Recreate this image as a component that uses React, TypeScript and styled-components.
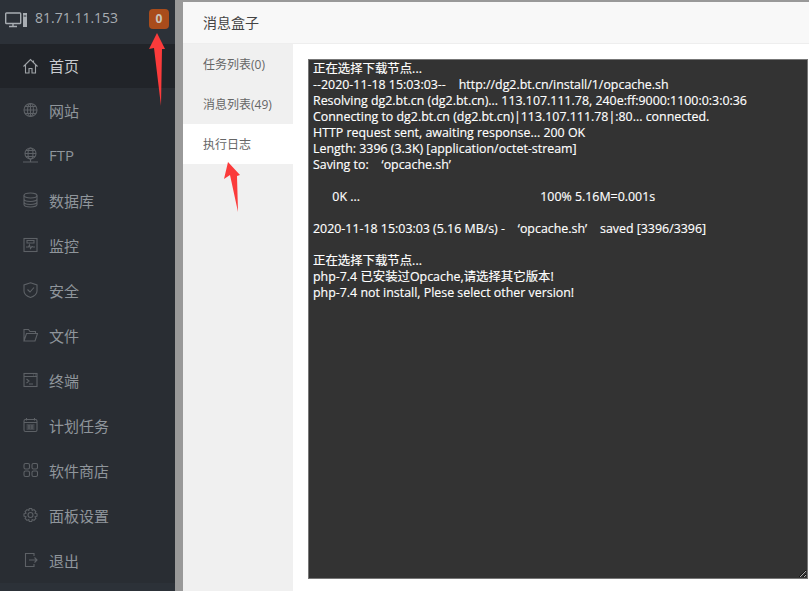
import React from "react";
import styled, { createGlobalStyle } from "styled-components";

const Global = createGlobalStyle`
  html, body { margin: 0; padding: 0; height: 591px; overflow: hidden; background: #999; }
  #root { height: 591px; }
  * { box-sizing: border-box; }
`;
const Page = styled.div`
  position: relative;
  display: flex;
  width: 809px;
  height: 591px;
  overflow: hidden;
  font-family: "Open Sans", "Noto Sans CJK SC", sans-serif;
`;
const Sidebar = styled.aside`
  width: 175px;
  flex: none;
  display: flex;
  flex-direction: column;
  background: #2c3138;
`;
const Head = styled.div`
  height: 44px;
  flex: none;
  display: flex;
  align-items: center;
  padding: 0 6px 0 5px;
  color: #a8adb2;
`;
const Ip = styled.span`
  margin-left: 8px;
  font-size: 14px;
  flex: 1;
  padding-bottom: 9px;
`;
const Badge = styled.span`
  width: 20px;
  height: 20px;
  margin-top: -7px;
  border-radius: 4px;
  background: #a94c1b;
  color: #c9c5bd;
  font-size: 12px;
  font-weight: 700;
  display: flex;
  align-items: center;
  justify-content: center;
`;
const MonitorIcon = styled.svg`
  margin-top: -5px;
  flex: none;
`;
const Nav = styled.nav`
  display: flex;
  flex-direction: column;
  background: #292d33;
`;
const Row = styled.div<{ $active?: boolean }>`
  height: ${p => (p.$active ? 44 : 45)}px;
  display: flex;
  align-items: center;
  padding: 0 0 1px 23px;
  gap: 11px;
  font-size: 15px;
  color: ${p => (p.$active ? "#c8ccd0" : "#8f959b")};
  background: ${p => (p.$active ? "#212429" : "transparent")};
  svg { color: ${p => (p.$active ? "#a0a4a8" : "#5d6166")}; flex: none; }
`;
const Main = styled.main`
  flex: 1;
  padding: 2px 0 0 8px;
  background: #999;
  min-width: 0;
`;
const Modal = styled.section`
  height: 100%;
  background: #fff;
  display: flex;
  flex-direction: column;
`;
const Title = styled.header`
  height: 42px;
  flex: none;
  background: #f8f8f8;
  border-bottom: 1px solid #eee;
  display: flex;
  align-items: center;
  padding: 0 0 2px 20px;
  font-size: 14px;
  color: #444;
`;
const Body = styled.div`
  flex: 1;
  display: flex;
  min-height: 0;
`;
const Tabs = styled.div`
  width: 110px;
  flex: none;
  background: #f0f0f0;
`;
const Tab = styled.div<{ $active?: boolean }>`
  height: 40px;
  display: flex;
  align-items: center;
  padding-left: 20px;
  font-size: 12px;
  color: #666;
  background: ${p => (p.$active ? "#fff" : "transparent")};
`;
const Content = styled.div`
  flex: 1;
  padding: 15px 0 0 15px;
`;
const Log = styled.div`
  width: 500px;
  height: 520px;
  background: #333;
  border: 1px solid #777;
  padding: 1px 4px 0;
  color: #fff;
  font-size: 12.4px;
  line-height: 16px;
  white-space: pre;
  overflow: hidden;
  resize: both;
  -webkit-text-stroke: 0.15px #fff;
`;
const Arrows = styled.svg`
  position: absolute;
  left: 0;
  top: 0;
  pointer-events: none;
`;

const Ico = ({ children, w = 15 }: { children: React.ReactNode; w?: number }) => (
  <svg width={w} height={16} viewBox={`0 0 ${w} 16`} fill="none" stroke="currentColor" strokeWidth={1.1}>
    {children}
  </svg>
);

const icons: React.ReactNode[] = [
  <path key="a" d="M.5 8.500 7.500 1.500 14.500 8.500M2.500 7V15H6V10.500H9V15H12.500V7M10.500 2.500V4.500" />,
  <g key="a"><circle cx="7.500" cy="8" r="6.500" /><ellipse cx="7.500" cy="8" rx="3" ry="6.500" /><path d="M1 8H14M2 4.500H13M2 11.500H13M7.500 1.500V14.500" /></g>,
  <g key="a"><circle cx="7.500" cy="6.500" r="5.500" /><ellipse cx="7.500" cy="6.500" rx="2.500" ry="5.500" /><path d="M2 6.500H13M3 3.500H12M3 9.500H12M7.500 12V15M0 15H15" /></g>,
  <g key="a"><ellipse cx="7.500" cy="3.500" rx="6.500" ry="2.500" /><path d="M1 3.500V12.500C1 14 4 15 7.500 15S14 14 14 12.500V3.500M1 7C1 8.500 4 9.500 7.500 9.500S14 8.500 14 7M1 10C1 11.500 4 12.500 7.500 12.500S14 11.500 14 10" /></g>,
  <g key="a"><rect x="1" y="1.500" width="13" height="13" /><path d="M3 10H5.500L6.500 8 7.500 11.500 9 9.500 10 10H12M4 3.500H11V6H4Z" /></g>,
  <g key="a"><path d="M7.500 .8 14 3V9C14 12 10.500 14.500 7.500 15.500 4.500 14.500 1 12 1 9V3Z" /><path d="M4.500 7.500 7 10 11 5.500" /></g>,
  <path key="a" d="M1 14V2.500H5.500L7 4.500H12.500V6.500M1 14H12L14.500 6.500H3.500L1 14Z" />,
  <g key="a"><rect x="1" y="1.500" width="13" height="13" /><path d="M1 4.500H14M3.500 7 6 9 3.500 11M6 12H10M10 3H10.800M12 3H12.800" /></g>,
  <g key="a"><rect x="1" y="2.500" width="13" height="12" rx="1.500" /><path d="M1 5.500H14M3.500 1V3.500M11.500 1V3.500M3.500 8H11.500M3.500 10H11.500M3.500 12H11.500M6 7.500V12.500M9 7.500V12.500" /></g>,
  <g key="a"><rect x="1" y="1.500" width="5.500" height="5.500" rx="1.500" /><rect x="9" y="1.500" width="5.500" height="5.500" rx="1.500" /><rect x="1" y="9" width="5.500" height="5.500" rx="1.500" /><rect x="9" y="9" width="5.500" height="5.500" rx="1.500" /></g>,
  <g key="a"><circle cx="7.500" cy="8" r="2.500" /><path d="M6.300 1.500H8.700L9.200 3.400 11 2.600 12.900 4.500 12 6.200 14 6.800V9.200L12 9.800 12.900 11.500 11 13.400 9.200 12.600 8.700 14.500H6.300L5.800 12.600 4 13.400 2.100 11.500 3 9.800 1 9.200V6.800L3 6.200 2.100 4.500 4 2.600 5.800 3.400Z" /></g>,
  <path key="a" d="M11 4V1.500H2.500V14.500H11V12M6 8H14M11.500 5.500 14 8 11.500 10.500" />,
];
const labels = ["首页", "网站", "FTP", "数据库", "监控", "安全", "文件", "终端", "计划任务", "软件商店", "面板设置", "退出"];

const log = `正在选择下载节点...
--2020-11-18 15:03:03--    http://dg2.bt.cn/install/1/opcache.sh
Resolving dg2.bt.cn (dg2.bt.cn)... 113.107.111.78, 240e:ff:9000:1100:0:3:0:36
Connecting to dg2.bt.cn (dg2.bt.cn)|113.107.111.78|:80... connected.
HTTP request sent, awaiting response... 200 OK
Length: 3396 (3.3K) [application/octet-stream]
Saving to:    ‘opcache.sh’

      0K ...                                                        100% 5.16M=0.001s

2020-11-18 15:03:03 (5.16 MB/s) -    ‘opcache.sh’    saved [3396/3396]

正在选择下载节点...
php-7.4 已安装过Opcache,请选择其它版本!
php-7.4 not install, Plese select other version!`;

export default function App() {
  return (
    <Page>
      <Global />
      <Sidebar>
        <Head>
          <MonitorIcon width="22" height="16" viewBox="0 0 22 16" fill="none" stroke="currentColor" strokeWidth="1.400">
            <rect x=".7" y="1" width="15" height="10.500" rx=".8" />
            <path d="M8 11.500V14M4 14.500H12" />
            <rect x="18" y="1" width="4" height="14" fill="currentColor" stroke="none" />
            <path d="M18.700 4H21.300" stroke="#2c3138" strokeWidth="1" />
          </MonitorIcon>
          <Ip>81.71.11.153</Ip>
          <Badge>0</Badge>
        </Head>
        <Nav>
          {labels.map((l, i) => (
            <Row key={l} $active={i === 0}>
              <Ico>{icons[i]}</Ico>
              <span>{l}</span>
            </Row>
          ))}
        </Nav>
      </Sidebar>
      <Main>
        <Modal>
          <Title>消息盒子</Title>
          <Body>
            <Tabs>
              <Tab>任务列表(0)</Tab>
              <Tab>消息列表(49)</Tab>
              <Tab $active>执行日志</Tab>
            </Tabs>
            <Content>
              <Log>{log}</Log>
            </Content>
          </Body>
        </Modal>
      </Main>
      <Arrows width="809" height="591" viewBox="0 0 809 591">
        <path d="M157 33 149 49 154 48 161 106 162 49 165 49Z" fill="#fb3b3b" />
        <path d="M228 162 224 179 230 175 238 212 237 176 240 175Z" fill="#fb3b3b" />
      </Arrows>
    </Page>
  );
}
